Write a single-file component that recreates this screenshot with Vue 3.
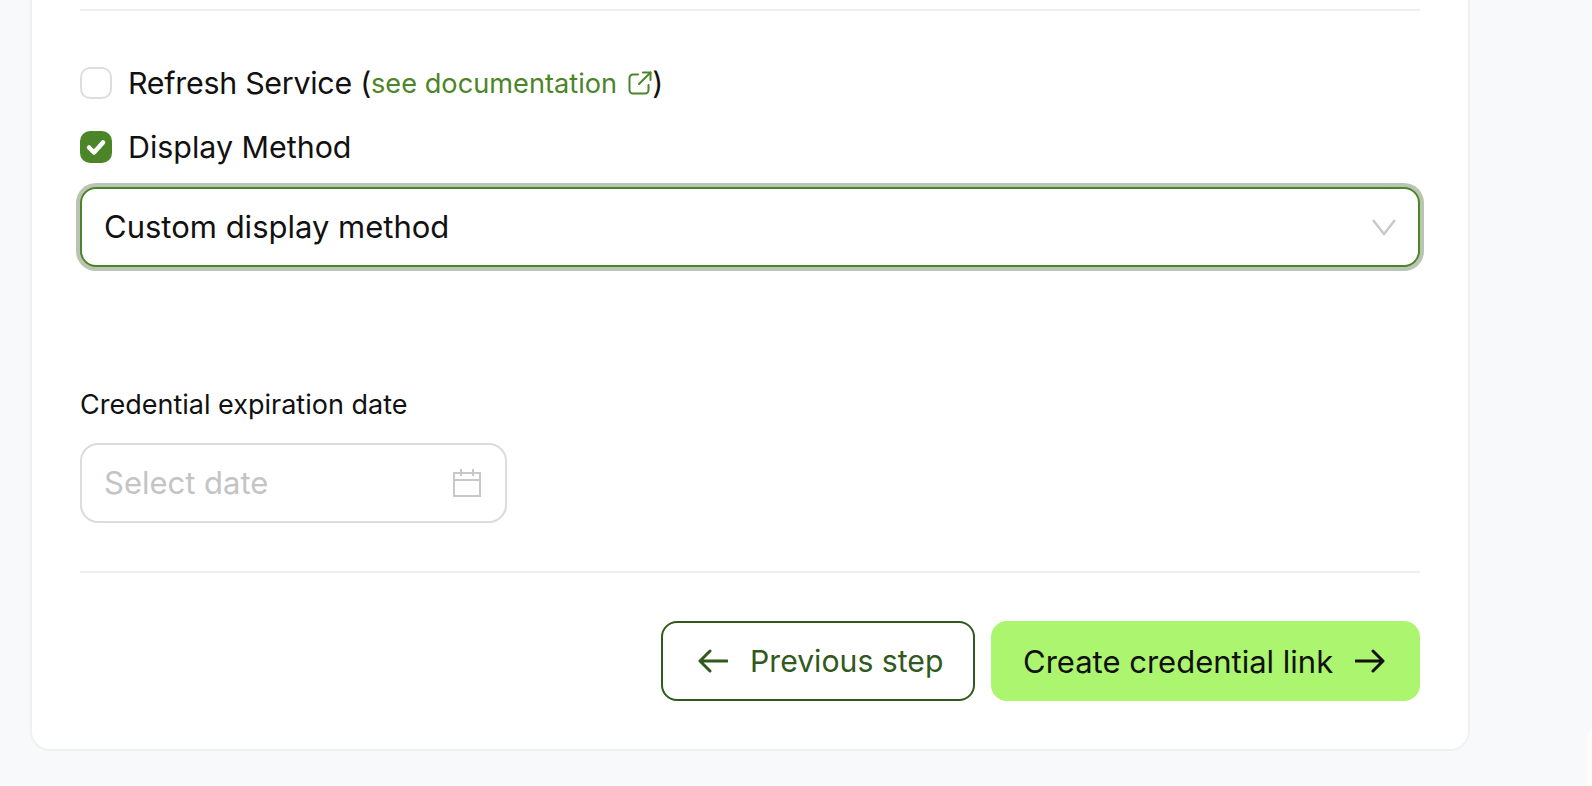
<script setup>
</script>

<template>
  <div class="page">
    <main class="card">
      <hr class="rule" />

      <div class="option first">
        <span class="box"></span>
        <span class="option-text"><span class="tight">Refresh Service (</span><a class="doc-link">see documentation<svg class="ext" viewBox="0 0 24 24" fill="none" stroke="currentColor" stroke-width="2" stroke-linecap="round" stroke-linejoin="round"><path d="M10 3.500H5a3.500 3.500 0 0 0-3.500 3.500v12A3.500 3.500 0 0 0 5 22.500h12a3.500 3.500 0 0 0 3.500-3.500v-5"/><path d="M15 1.500h7.500V9"/><path d="M22.500 1.500 11 13"/></svg></a>)</span>
      </div>

      <div class="option second">
        <span class="box on">
          <svg viewBox="0 0 32 32" fill="none" stroke="#fff" stroke-width="4.500" stroke-linecap="round" stroke-linejoin="round"><path d="M9 16.500l5 5 9-10"/></svg>
        </span>
        <span class="option-text">Display Method</span>
      </div>

      <div class="select">
        <span class="value">Custom display method</span>
        <svg class="chev" viewBox="0 0 24 17" fill="none" stroke="#c8c8c8" stroke-width="2.400"><path d="M1 1l11 14L23 1"/></svg>
      </div>

      <div class="field-label">Credential expiration date</div>
      <div class="date">
        <span class="value">Select date</span>
        <svg class="cal" viewBox="0 0 28 28" fill="none" stroke="#c8c8c8" stroke-width="2"><rect x="1" y="4" width="26" height="23"/><path d="M1 11h26M8 0v7M20 0v7"/></svg>
      </div>

      <hr class="rule lower" />

      <div class="actions">
        <button class="btn prev">
          <svg class="arrow" viewBox="0 0 30 24" fill="none" stroke="currentColor" stroke-width="3" stroke-linecap="round" stroke-linejoin="round"><path d="M29 12H2M12 2 2 12l10 10"/></svg>
          Previous step
        </button>
        <button class="btn next">
          Create credential link
          <svg class="arrow" viewBox="0 0 30 24" fill="none" stroke="currentColor" stroke-width="3" stroke-linecap="round" stroke-linejoin="round"><path d="M1 12h27M18 2l10 10-10 10"/></svg>
        </button>
      </div>
    </main>
    <aside class="side"></aside>
  </div>
</template>

<style>
html, body { margin: 0; background: #f8f9fb; }
</style>

<style scoped>
.page {
  display: flex;
  align-items: flex-start;
  height: 786px;
  width: 1592px;
  overflow: hidden;
  padding-left: 30px;
  box-sizing: border-box;
  background: #f8f9fb;
  font-family: Inter, "Liberation Sans", sans-serif;
  color: #111;
}
.card {
  width: 1440px;
  flex: none;
  box-sizing: border-box;
  padding: 9px 48px 48px;
  background: #fff;
  border: 2px solid #eff0f1;
  border-top: 0;
  border-radius: 0 0 20px 20px;
}
.side {
  flex: none;
  width: 40px;
  height: 80px;
  margin-top: 725px;
  margin-left: 117px;
  background: #fdfdfe;
  border-radius: 14px 0 0 0;
}
.rule {
  margin: 0;
  border: 0;
  height: 2px;
  background: #eeeff0;
}
.rule.lower { margin-top: 48px; }
.option {
  display: flex;
  align-items: center;
  gap: 16px;
  height: 32px;
  font-size: 30.400px;
}
.option.first { margin-top: 56px; }
.option.second { margin-top: 32px; }
.option-text { display: inline-flex; align-items: center; white-space: pre; }
.tight { letter-spacing: -0.27px; }
.box {
  width: 32px;
  height: 32px;
  flex: none;
  box-sizing: border-box;
  border: 2px solid #dedede;
  border-radius: 10px;
}
.box.on {
  border: 0;
  background: #4c8527;
}
.box.on svg { display: block; width: 32px; height: 32px; }
.doc-link {
  display: inline-flex;
  align-items: center;
  gap: 11px;
  color: #4c8527;
  font-size: 27.200px;
}
.ext { width: 24px; height: 24px; }
.select {
  margin-top: 24px;
  height: 80px;
  box-sizing: border-box;
  display: flex;
  align-items: center;
  justify-content: space-between;
  padding: 0 22px;
  font-size: 31px;
  background: #fff;
  border: 2px solid #4c8527;
  border-radius: 16px;
  box-shadow: 0 0 0 4px #bac4b3;
}
.value { margin-bottom: 2px; }
.chev { width: 24px; height: 17px; }
.field-label {
  margin-top: 120px;
  font-size: 27px;
  line-height: 36px;
}
.date {
  margin-top: 20px;
  width: 427px;
  height: 80px;
  box-sizing: border-box;
  display: flex;
  align-items: center;
  justify-content: space-between;
  padding: 0 24px 0 22px;
  font-size: 31px;
  color: #c4c4c4;
  border: 2px solid #dcdcdc;
  border-radius: 18px;
}
.cal { width: 28px; height: 28px; }
.actions {
  margin-top: 48px;
  display: flex;
  justify-content: flex-end;
  gap: 16px;
}
.btn {
  height: 80px;
  box-sizing: border-box;
  display: flex;
  align-items: center;
  gap: 22px;
  border-radius: 16px;
  font: inherit;
  cursor: pointer;
}
.prev {
  width: 314px;
  padding: 0 0 0 35px;
  background: #fff;
  color: #31591b;
  border: 2px solid #31591b;
  font-size: 30.200px;
}
.next {
  width: 429px;
  padding: 0 0 0 32px;
  background: #acf56f;
  color: #111;
  border: 0;
  font-size: 31px;
}
.arrow { width: 30px; height: 24px; flex: none; }
</style>
